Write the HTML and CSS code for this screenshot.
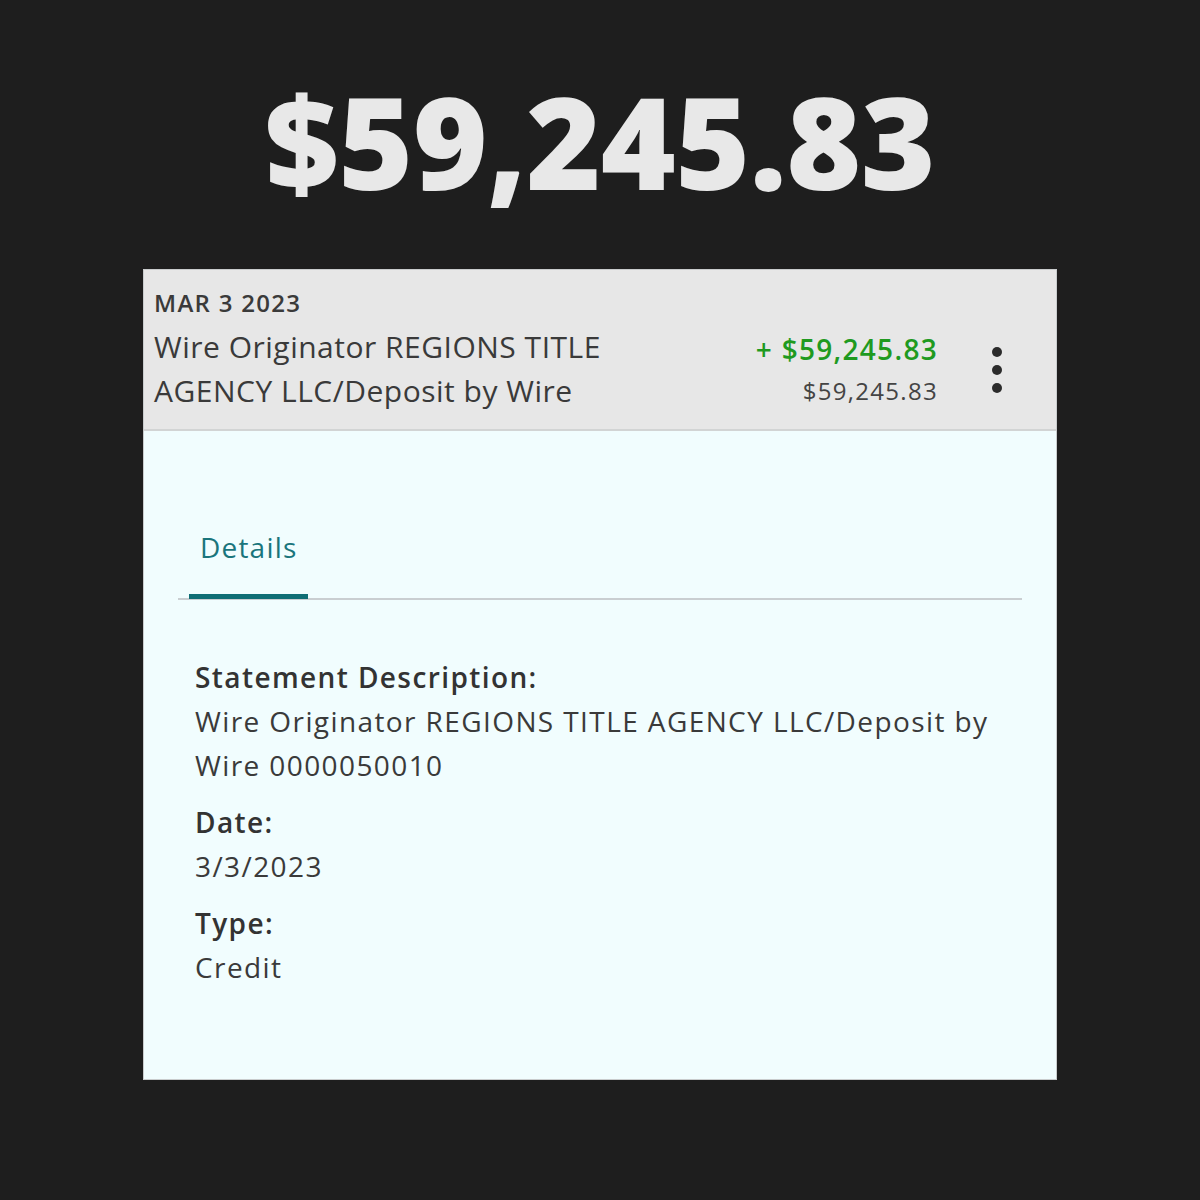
FILE: index.html
```html
<!DOCTYPE html>
<html>
<head>
<meta charset="utf-8">
<link rel="stylesheet" href="styles.css">
</head>
<body>
<div class="page">
  <h1 class="headline">$59,245.83</h1>
  <div class="card">
    <div class="card-head">
      <div class="head-left">
        <div class="date">MAR 3 2023</div>
        <div class="desc">Wire Originator REGIONS TITLE<br>AGENCY LLC/Deposit by Wire</div>
      </div>
      <div class="head-right">
        <div class="amt">+ $59,245.83</div>
        <div class="bal">$59,245.83</div>
      </div>
      <div class="kebab"><span></span><span></span><span></span></div>
    </div>
    <div class="card-body">
      <div class="tabs">
        <div class="tab active">Details</div>
      </div>
      <div class="fields">
        <div class="field">
          <div class="label">Statement Description:</div>
          <div class="value">Wire Originator REGIONS TITLE AGENCY LLC/Deposit by Wire 0000050010</div>
        </div>
        <div class="field">
          <div class="label">Date:</div>
          <div class="value">3/3/2023</div>
        </div>
        <div class="field">
          <div class="label">Type:</div>
          <div class="value">Credit</div>
        </div>
      </div>
    </div>
  </div>
</div>
</body>
</html>
```
FILE: styles.css
```css
html, body {
  margin: 0;
  padding: 0;
  background: #1e1e1e;
}
.page {
  width: 1200px;
  height: 1200px;
  display: flex;
  flex-direction: column;
  align-items: center;
  font-family: "Open Sans", "Noto Sans", sans-serif;
}
.headline {
  margin: 66px 0 0 0;
  height: 170px;
  font-family: "Open Sans", sans-serif;
  font-weight: 800;
  font-size: 128px;
  line-height: 150px;
  letter-spacing: -0.5px;
  color: #e8e8e8;
}
.card {
  margin-top: 33px;
  width: 912px;
  height: 809px;
  border: 1px solid #c9cccd;
  background: #f1fdfe;
  display: flex;
  flex-direction: column;
}
.card-head {
  background: #e7e7e7;
  border-bottom: 2px solid #d2d4d4;
  height: 161px;
  box-sizing: border-box;
  display: flex;
  padding: 16px 0 0 10px;
  color: #3a3a3a;
}
.head-left {
  flex: 1;
}
.date {
  font-size: 24px;
  font-weight: 600;
  line-height: 34px;
  letter-spacing: 1.3px;
  color: #3a3a3a;
}
.desc {
  font-size: 30px;
  line-height: 44px;
  letter-spacing: 0.5px;
  margin-top: 5px;
}
.head-right {
  display: flex;
  flex-direction: column;
  align-items: flex-end;
  padding-top: 44px;
}
.amt {
  font-size: 28px;
  font-weight: 600;
  color: #1f9a1f;
  line-height: 38px;
  letter-spacing: 1.3px;
}
.bal {
  font-size: 24px;
  color: #444;
  line-height: 46px;
  letter-spacing: 1.3px;
}
.kebab {
  width: 118px;
  display: flex;
  flex-direction: column;
  align-items: center;
  gap: 8px;
  padding-top: 61px;
}
.kebab span {
  width: 10px;
  height: 10px;
  border-radius: 50%;
  background: #2b2b2b;
}
.card-body {
  padding: 0 34px 0 34px;
}
.tabs {
  margin-top: 96px;
  border-bottom: 2px solid #c9ced1;
  display: flex;
  padding-left: 11px;
}
.tab {
  font-size: 28px;
  line-height: 40px;
  letter-spacing: 1.2px;
  color: #1a757c;
  padding: 0 11px 27px 11px;
  border-bottom: 5px solid #0f6e75;
  margin-bottom: -1px;
}
.fields {
  padding: 55px 0 0 17px;
}
.field {
  margin-bottom: 13px;
}
.label {
  font-size: 28px;
  font-weight: 600;
  line-height: 44px;
  letter-spacing: 1.4px;
  color: #333;
}
.value {
  font-size: 28px;
  line-height: 44px;
  letter-spacing: 1.4px;
  color: #3a3a3a;
}
```
